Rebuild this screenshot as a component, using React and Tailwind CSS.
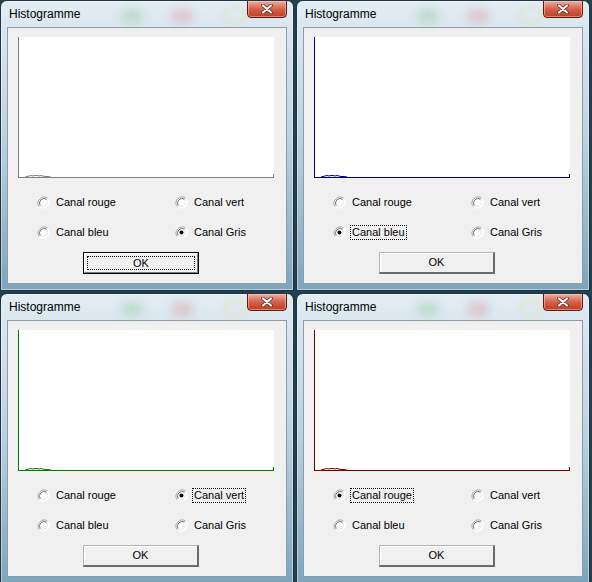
import React from "react";

const windows = [
  { color: "#808080", selected: "gris", focus: "ok" },
  { color: "#000080", selected: "bleu", focus: "bleu" },
  { color: "#008000", selected: "vert", focus: "vert" },
  { color: "#800000", selected: "rouge", focus: "rouge" },
];

const options = [
  { id: "rouge", label: "Canal rouge" },
  { id: "vert", label: "Canal vert" },
  { id: "bleu", label: "Canal bleu" },
  { id: "gris", label: "Canal Gris" },
];

function Radio({ checked }) {
  return (
    <svg width="13" height="13" viewBox="0 0 13 13" className="shrink-0">
      <circle cx="6.5" cy="6.5" r="6" fill="#ffffff" />
      <path d="M2.3 10.7 A6 6 0 0 1 10.7 2.3" fill="none" stroke="#a0a0a0" strokeWidth="1" />
      <path d="M3.3 9.7 A4.6 4.6 0 0 1 9.7 3.3" fill="none" stroke="#6b6b6b" strokeWidth="1" />
      <path d="M10.7 2.3 A6 6 0 0 1 2.3 10.7" fill="none" stroke="#ffffff" strokeWidth="1" />
      <path d="M9.7 3.3 A4.6 4.6 0 0 1 3.3 9.7" fill="none" stroke="#e3e3e3" strokeWidth="1" />
      {checked && <circle cx="6.5" cy="6.5" r="2" fill="#000000" />}
    </svg>
  );
}

function Histogram({ color }) {
  return (
    <svg width="256" height="141" viewBox="0 0 256 141" className="block bg-white">
      <line x1="0.5" y1="0" x2="0.5" y2="141" stroke={color} strokeWidth="1" />
      <line x1="0" y1="140.5" x2="256" y2="140.5" stroke={color} strokeWidth="1" />
      <line x1="255.5" y1="137" x2="255.5" y2="141" stroke={color} strokeWidth="1" />
      <polyline
        points="7,140 9,139.5 11,139 13,138.5 15,139 17,138.5 19,138.5 21,139 23,138.5 25,139 27,139.5 30,139.5 33,140"
        fill="none"
        stroke={color}
        strokeWidth="1"
      />
    </svg>
  );
}

function CloseButton() {
  return (
    <div className="absolute right-[6px] top-[-1px] flex h-[18px] w-[40px] items-center justify-center rounded-b-[4px] border border-[#5a1a10] bg-gradient-to-b from-[#eab0a2] via-[#d4604a] to-[#c33a20] shadow-[inset_0_0_0_1px_rgba(255,210,200,0.5)]">
      <svg width="12" height="10" viewBox="0 0 12 10">
        <path d="M2 1.5 L10 8.5 M10 1.5 L2 8.5" stroke="#5a2218" strokeWidth="3.6" strokeLinecap="round" />
        <path d="M2 1.5 L10 8.5 M10 1.5 L2 8.5" stroke="#ffffff" strokeWidth="2.2" strokeLinecap="round" />
      </svg>
    </div>
  );
}

function OkButton({ focused }) {
  if (focused) {
    return (
      <div className="ml-[75px] mt-[12px] h-[22px] w-[116px] border border-black">
        <div className="flex h-full w-full items-center justify-center border-t border-l border-t-white border-l-white border-b border-r border-b-[#7a7a7a] border-r-[#7a7a7a] bg-[#f0f0f0] p-[2px]">
          <div className="flex h-full w-full items-center justify-center border border-dotted border-black text-[11px] leading-none">
            OK
          </div>
        </div>
      </div>
    );
  }
  return (
    <div className="ml-[75px] mt-[12px] flex h-[22px] w-[116px] items-center justify-center border-t border-l border-t-[#b4b4b4] border-l-[#b4b4b4] border-b-2 border-r-2 border-b-[#6b6b6b] border-r-[#6b6b6b] bg-[#f0f0f0] text-[11px] leading-none shadow-[inset_1px_1px_0_#ffffff]">
      OK
    </div>
  );
}

function HistoWindow({ color, selected, focus }) {
  return (
    <div className="relative flex h-[291px] w-[294px] flex-col overflow-hidden rounded-t-[7px] border border-[#1c3546] bg-gradient-to-b from-[#e2ecf3] via-[#b9d0de] to-[#7ea5bb] shadow-[inset_0_0_0_1px_rgba(255,255,255,0.45)]">
      <div className="pointer-events-none absolute left-[120px] top-[8px] h-[14px] w-[22px] rounded-full bg-[#7fc48a] opacity-35 blur-[5px]" />
      <div className="pointer-events-none absolute left-[170px] top-[8px] h-[14px] w-[22px] rounded-full bg-[#d98a8a] opacity-35 blur-[5px]" />
      <div className="pointer-events-none absolute left-[222px] top-[5px] h-[18px] w-[24px] rounded-full border-[3px] border-[#e8e0a0] opacity-40 blur-[2px]" />
      <div className="relative flex h-[26px] shrink-0 items-center pl-[8px] text-[12px] text-black">
        Histogramme
      </div>
      <CloseButton />
      <div className="mx-[6px] mb-[6px] flex flex-1 flex-col border border-[#8b9caa] bg-[#f0f0f0] text-black">
        <div className="ml-[10px] mt-[9px]">
          <Histogram color={color} />
        </div>
        <div className="ml-[29px] mt-[16px] grid grid-cols-[138px_auto] gap-y-[14px]">
          {options.map((o) => (
            <div key={o.id} className="flex h-[16px] items-center gap-[4px]">
              <Radio checked={selected === o.id} />
              <span
                className={
                  focus === o.id
                    ? "border border-dotted border-black px-[1px] text-[11px] leading-[13px]"
                    : "border border-transparent px-[1px] text-[11px] leading-[13px]"
                }
              >
                {o.label}
              </span>
            </div>
          ))}
        </div>
        <OkButton focused={focus === "ok"} />
      </div>
    </div>
  );
}

export default function App() {
  return (
    <div
      className="h-[582px] w-[592px] overflow-hidden bg-[#23404f]"
      style={{ fontFamily: '"Liberation Sans", Arial, sans-serif' }}
    >
      <div className="grid grid-cols-[294px_294px] gap-x-[2px] gap-y-[2px]">
        {windows.map((w, i) => (
          <HistoWindow key={i} {...w} />
        ))}
      </div>
    </div>
  );
}
